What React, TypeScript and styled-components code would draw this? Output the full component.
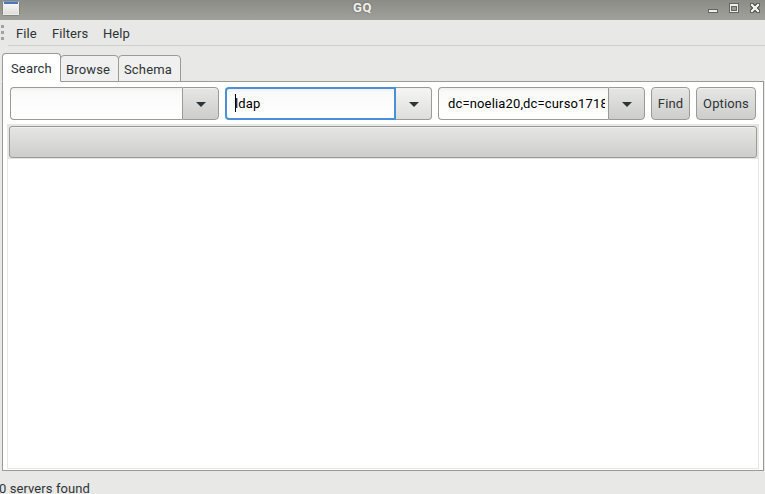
import React from "react";
import styled, { createGlobalStyle } from "styled-components";

const Global = createGlobalStyle`
  * { box-sizing: border-box; }
  html, body { margin: 0; padding: 0; overflow: hidden; }
  body { font: 13px/16px Roboto, "Liberation Sans", sans-serif; color: #2e3436; background: #e8e8e7; }
`;

const Window = styled.div`
  width: 765px;
  height: 494px;
  display: flex;
  flex-direction: column;
  background: #e8e8e6;
  overflow: hidden;
  cursor: default;
`;

const TitleBar = styled.header`
  height: 20px;
  flex: none;
  display: grid;
  grid-template-columns: 60px 1fr 60px;
  background: linear-gradient(#8b8c85, #a0a19a);
`;

const Title = styled.div`
  text-align: center;
  padding-right: 40px;
  font-weight: 700;
  line-height: 16px;
  letter-spacing: 0.7px;
  color: #f2f2f0;
  text-shadow: 0 0 2px #5c5d58;
`;

const Controls = styled.svg`
  display: block;
  width: 60px;
  height: 20px;
`;

const MenuBar = styled.nav`
  height: 26px;
  flex: none;
  display: flex;
`;

const Grip = styled.div`
  width: 8px;
  padding-top: 5px;
  display: flex;
  flex-direction: column;
  gap: 3px;
`;

const GripDot = styled.span`
  width: 3px;
  height: 3px;
  margin-left: 1px;
  background: #a3a39e;
`;

const MenuItems = styled.div`
  flex: 1;
  display: flex;
  gap: 16px;
  padding: 6px 0 0 8px;
  border-bottom: 1px solid #cfcfcd;
`;

const MenuItem = styled.span<{ $width: number }>`
  width: ${(p) => p.$width}px;
  white-space: nowrap;
  letter-spacing: 0.08px;
`;

const Tabs = styled.div`
  height: 29px;
  flex: none;
  margin: 7px 0 -1px 2px;
  display: flex;
  align-items: flex-end;
`;

const Tab = styled.div<{ $width: number; $active?: boolean }>`
  width: ${(p) => p.$width}px;
  height: ${(p) => (p.$active ? 29 : 27)}px;
  padding: ${(p) => (p.$active ? "7px 0 0 8px" : "6px 0 0 5px")};
  margin-left: ${(p) => (p.$active ? 0 : -1)}px;
  border: 1px solid #9a9b94;
  border-bottom-color: ${(p) => (p.$active ? "#fff" : "#9a9b94")};
  border-radius: 4px 4px 0 0;
  background: ${(p) => (p.$active ? "#fff" : "#f0f0f0")};
  position: relative;
  z-index: ${(p) => (p.$active ? 1 : 0)};
  letter-spacing: 0.15px;
`;

const Page = styled.main`
  width: 762px;
  height: 390px;
  flex: none;
  margin-left: 2px;
  padding: 5px 4px 1px;
  display: flex;
  flex-direction: column;
  gap: 4px;
  background: #fff;
  border: 1px solid #9a9b94;
`;

const SearchRow = styled.div`
  height: 33px;
  flex: none;
  display: flex;
  gap: 6px;
  padding-left: 3px;
`;

const Combo = styled.div<{ $width: number }>`
  width: ${(p) => p.$width}px;
  display: flex;
`;

const Entry = styled.div<{ $focused?: boolean }>`
  flex: 1;
  min-width: 0;
  padding: ${(p) => (p.$focused ? "7px 2px 0 8px" : "8px 3px 0 9px")};
  border: ${(p) => (p.$focused ? "2px solid #4a90d9" : "1px solid #9a9b94")};
  border-right-width: ${(p) => (p.$focused ? 2 : 0)}px;
  border-radius: 4px 0 0 4px;
  background: linear-gradient(#f1f1f1, #fafafa 4px, #fff);
  color: #000;
  display: flex;
`;

const EntryText = styled.span`
  min-width: 0;
  flex: 1;
  height: 18px;
  overflow: hidden;
  white-space: nowrap;
  letter-spacing: 0.15px;
`;

const Caret = styled.i`
  width: 1px;
  height: 18px;
  margin: -2px -1px 0 0;
  background: #000;
`;

const Button = styled.div<{ $width: number; $light?: boolean }>`
  width: ${(p) => p.$width}px;
  display: flex;
  align-items: center;
  justify-content: center;
  border: 1px solid #9a9b94;
  border-radius: 4px;
  background: ${(p) => (p.$light ? "linear-gradient(#f5f5f4, #dededc)" : "linear-gradient(#e6e6e5, #cdcdcb)")};
  box-shadow: inset 0 1px #f0f0ef;
  letter-spacing: 0.12px;
`;

const DropButton = styled(Button)`
  border-radius: 0 4px 4px 0;
  border-left-width: ${(p) => (p.$light ? 0 : 1)}px;
  padding-top: 2px;
`;

const ListFrame = styled.div`
  width: 752px;
  flex: 1;
  border: 1px solid #e6e6e4;
  background: #fff;
`;

const ListHeader = styled.div`
  height: 34px;
  padding: 1px;
  background: #e6e6e4;
`;

const HeaderButton = styled(Button)`
  height: 32px;
  border-radius: 3px;
`;

const Status = styled.footer`
  padding-top: 10px;
  margin-left: -1px;
  letter-spacing: 0.08px;
`;

const Arrow = () => (
  <svg width="10" height="5" viewBox="0 0 10 5">
    <path d="M0 0h10L5 5z" fill="#2e3436" />
  </svg>
);

const AppIcon = () => (
  <svg width="22" height="20" viewBox="0 0 22 20">
    <defs>
      <linearGradient id="pane" x1="0" y1="0" x2="0" y2="1">
        <stop offset="0" stopColor="#fff" />
        <stop offset="1" stopColor="#d9dad6" />
      </linearGradient>
    </defs>
    <rect x="2.5" y="0.5" width="17" height="15" rx="1" fill="url(#pane)" stroke="#85877e" />
    <rect x="3.5" y="1.5" width="15" height="13" fill="none" stroke="#ecece9" />
    <path d="M3 1h16v1H3z" fill="#7f9cc6" />
    <path d="M4 2h14v2H4z" fill="#4c78b5" />
  </svg>
);

const WindowControls = () => (
  <Controls viewBox="0 0 60 20" shapeRendering="crispEdges">
    <path d="M3 9h10v4H3z" fill="#62635e" />
    <path d="M4 10h8v2H4z" fill="#eeeeec" />
    <path d="M24 3h10v10H24z" fill="#62635e" />
    <path d="M25 4h8v8H25z" fill="#eeeeec" />
    <path d="M26 6h6v5H26z" fill="#62635e" />
    <path d="M27 7h4v3H27z" fill="#999a93" />
    <path d="M45 3h4v1h2V3h4v4h-1v2h1v4h-4v-1h-2v1h-4V9h1V7h-1z" fill="#62635e" />
    <path d="M46 4h2v1h1v1h2V5h1V4h2v2h-1v1h-1v2h1v1h1v2h-2v-1h-1v-1h-2v1h-1v1h-2v-2h1V9h1V7h-1V6h-1z" fill="#eeeeec" />
  </Controls>
);

export default function App() {
  return (
    <>
      <Global />
      <Window>
        <TitleBar>
          <AppIcon />
          <Title>GQ</Title>
          <WindowControls />
        </TitleBar>
        <MenuBar>
          <Grip><GripDot /><GripDot /><GripDot /></Grip>
          <MenuItems>
            <MenuItem $width={20}>File</MenuItem>
            <MenuItem $width={35}>Filters</MenuItem>
            <MenuItem $width={27}>Help</MenuItem>
          </MenuItems>
        </MenuBar>
        <Tabs>
          <Tab $width={59} $active>Search</Tab>
          <Tab $width={59}>Browse</Tab>
          <Tab $width={63}>Schema</Tab>
        </Tabs>
        <Page>
          <SearchRow>
            <Combo $width={209}>
              <Entry />
              <DropButton $width={37}><Arrow /></DropButton>
            </Combo>
            <Combo $width={207}>
              <Entry $focused><Caret /><EntryText>ldap</EntryText></Entry>
              <DropButton $width={36} $light><Arrow /></DropButton>
            </Combo>
            <Combo $width={207}>
              <Entry><EntryText>dc=noelia20,dc=curso1718</EntryText></Entry>
              <DropButton $width={37}><Arrow /></DropButton>
            </Combo>
            <Button $width={39}>Find</Button>
            <Button $width={60}>Options</Button>
          </SearchRow>
          <ListFrame>
            <ListHeader><HeaderButton $width={748} /></ListHeader>
          </ListFrame>
        </Page>
        <Status>0 servers found</Status>
      </Window>
    </>
  );
}
